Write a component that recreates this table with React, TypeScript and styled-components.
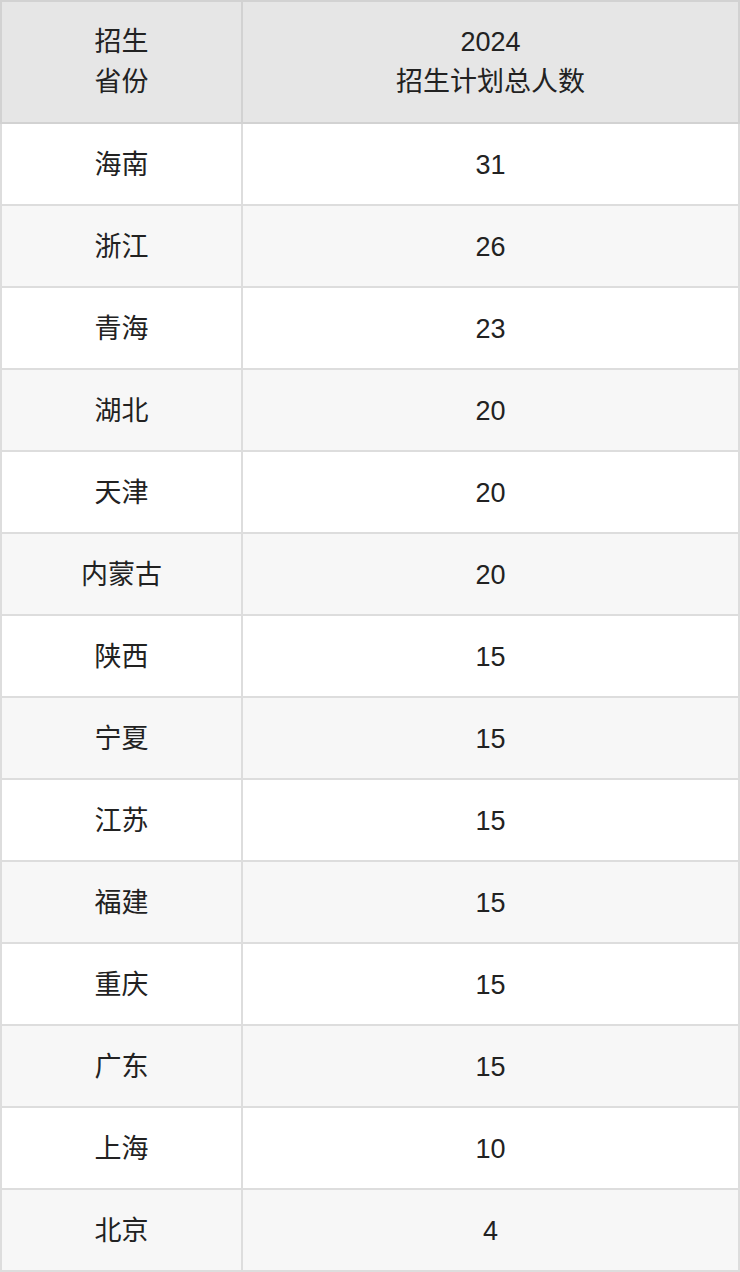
import React from "react"
import styled, { createGlobalStyle } from "styled-components"

const GlobalStyle = createGlobalStyle`
  body {
    margin: 0;
    background: #ffffff;
    font-family: "Liberation Sans", "Noto Sans CJK SC", sans-serif;
  }
`

const Table = styled.table`
  width: 740px;
  border-collapse: collapse;
  table-layout: fixed;
  color: #222222;
  font-size: 27px;
`

const HeadCell = styled.th<{ w?: number }>`
  width: ${props => (props.w ? `${props.w}px` : "auto")};
  height: 120px;
  padding: 0;
  background-color: #e6e6e6;
  border: 2px solid #d2d2d2;
  font-weight: normal;
  line-height: 40px;
  text-align: center;
  vertical-align: middle;
`

const Row = styled.tr<{ even: boolean }>`
  background-color: ${props => (props.even ? "#f7f7f7" : "#ffffff")};
`

const Cell = styled.td`
  height: 78px;
  padding: 2px 0 0;
  border: 2px solid #dddddd;
  text-align: center;
  vertical-align: middle;
  line-height: 30px;
`

const rows: [string, number][] = [
  ["海南", 31],
  ["浙江", 26],
  ["青海", 23],
  ["湖北", 20],
  ["天津", 20],
  ["内蒙古", 20],
  ["陕西", 15],
  ["宁夏", 15],
  ["江苏", 15],
  ["福建", 15],
  ["重庆", 15],
  ["广东", 15],
  ["上海", 10],
  ["北京", 4],
]

export default function App() {
  return (
    <>
      <GlobalStyle />
      <Table>
        <thead>
          <tr>
            <HeadCell w={239}>
              招生
              <br />
              省份
            </HeadCell>
            <HeadCell>
              2024
              <br />
              招生计划总人数
            </HeadCell>
          </tr>
        </thead>
        <tbody>
          {rows.map(([province, count], i) => (
            <Row key={province} even={i % 2 === 1}>
              <Cell>{province}</Cell>
              <Cell>{count}</Cell>
            </Row>
          ))}
        </tbody>
      </Table>
    </>
  )
}
